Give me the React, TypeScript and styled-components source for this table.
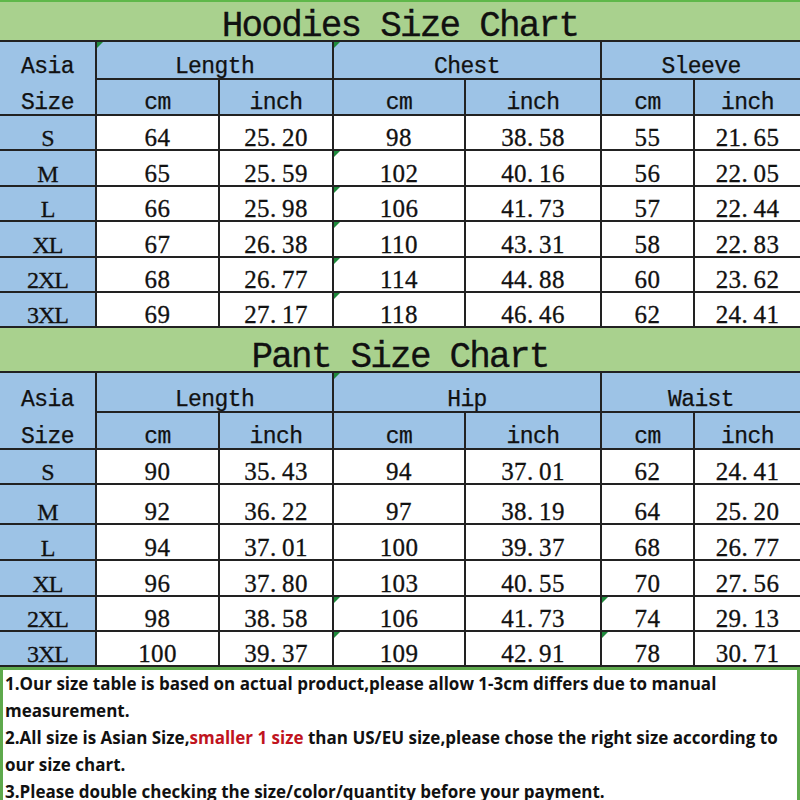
import styled, { createGlobalStyle } from 'styled-components';

const GlobalStyle = createGlobalStyle`
  html, body {
    margin: 0;
    padding: 0;
    background: #fff;
  }
  body {
    width: 800px;
    height: 800px;
    overflow: hidden;
  }
`;

interface ChartProps {
  title: string;
  groups: string[];
  rows: string[][];
  heights: number[];
  flags: string[];
  first?: boolean;
}

// cells are bottom aligned, the way a spreadsheet lays them out
const Chart = ({ title, groups, rows, heights, flags, first }: ChartProps) => {
  const template = heights.map(h => `${h}px`).join(' ');
  return (
    <Grid $rows={template}>
      <Title $top={first}>{title}</Title>
      <Cell $head $open $flag={flags.includes('h0')}>
        <Label>Asia</Label>
      </Cell>
      {groups.map((g, i) => (
        <Cell key={g} $head $span={2} $end={i === 2} $flag={flags.includes(`g${i}`)}>
          <Label>{g}</Label>
        </Cell>
      ))}
      <Cell $head>
        <Label>Size</Label>
      </Cell>
      {[0, 1, 2].map(i => [
        <Cell key={`c${i}`} $head>
          <Label>cm</Label>
        </Cell>,
        <Cell key={`i${i}`} $head $end={i === 2}>
          <Label>inch</Label>
        </Cell>,
      ])}
      {rows.map((row, r) =>
        row.map((v, c) => (
          <Cell
            key={`${r}-${c}`}
            $head={c === 0}
            $end={c === 6}
            $flag={flags.includes(`${r}-${c}`)}
          >
            {c === 0 ? <SizeText>{v}</SizeText> : <Num v={v} />}
          </Cell>
        ))
      )}
    </Grid>
  );
};

const Num = ({ v }: { v: string }) => {
  const [a, b] = v.split('.');
  return (
    <NumText>
      {a}
      {b !== undefined && (
        <>
          <Dot>.</Dot>
          {b}
        </>
      )}
    </NumText>
  );
};

const hoodies = [
  ['S', '64', '25.20', '98', '38.58', '55', '21.65'],
  ['M', '65', '25.59', '102', '40.16', '56', '22.05'],
  ['L', '66', '25.98', '106', '41.73', '57', '22.44'],
  ['XL', '67', '26.38', '110', '43.31', '58', '22.83'],
  ['2XL', '68', '26.77', '114', '44.88', '60', '23.62'],
  ['3XL', '69', '27.17', '118', '46.46', '62', '24.41'],
];

const pants = [
  ['S', '90', '35.43', '94', '37.01', '62', '24.41'],
  ['M', '92', '36.22', '97', '38.19', '64', '25.20'],
  ['L', '94', '37.01', '100', '39.37', '68', '26.77'],
  ['XL', '96', '37.80', '103', '40.55', '70', '27.56'],
  ['2XL', '98', '38.58', '106', '41.73', '74', '29.13'],
  ['3XL', '100', '39.37', '109', '42.91', '78', '30.71'],
];

export default function App() {
  return (
    <Page>
      <GlobalStyle />
      <Chart
        first
        title="Hoodies Size Chart"
        groups={['Length', 'Chest', 'Sleeve']}
        rows={hoodies}
        heights={[42, 38, 36, 35, 36, 35, 36, 35, 35]}
        flags={['g0', 'g1', '1-3', '2-3', '3-3', '4-3', '5-3']}
      />
      <Chart
        title="Pant Size Chart"
        groups={['Length', 'Hip', 'Waist']}
        rows={pants}
        heights={[45, 40, 37, 35, 40, 36, 36, 35, 35]}
        flags={['g1', '4-3', '5-3', '4-5', '5-5']}
      />
      <Notes>
        1.Our size table is based on actual product,please allow 1-3cm differs due to manual
        <br />
        measurement.
        <br />
        2.All size is Asian Size,<Red>smaller 1 size</Red> than US/EU size,please chose the right size according to
        <br />
        our size chart.
        <br />
        3.Please double checking the size/color/quantity before your payment.
      </Notes>
    </Page>
  );
}

const Page = styled.div`
  width: 800px;
  height: 800px;
  overflow: hidden;
  display: flex;
  flex-direction: column;
`;

const Grid = styled.div<{ $rows: string }>`
  display: grid;
  grid-template-columns: 97px 123px 114px 132px 136px 93px 105px;
  grid-template-rows: ${p => p.$rows};
  flex-shrink: 0;
`;

const Title = styled.div<{ $top?: boolean }>`
  grid-column: 1 / -1;
  box-sizing: border-box;
  background: #a9d18e;
  border-top: ${p => (p.$top ? '2px solid #5fb84a' : 'none')};
  border-bottom: 2px solid #222;
  display: flex;
  align-items: flex-end;
  justify-content: center;
  font-family: 'Liberation Mono', monospace;
  font-size: 36px;
  line-height: 26px;
  letter-spacing: -1.8px;
  color: #111;
  -webkit-text-stroke: 0.3px #111;
`;

const Cell = styled.div<{ $head?: boolean; $span?: number; $open?: boolean; $flag?: boolean; $end?: boolean }>`
  position: relative;
  box-sizing: border-box;
  grid-column: span ${p => p.$span ?? 1};
  background: ${p => (p.$head ? '#9dc3e6' : '#fff')};
  border-right: ${p => (p.$end ? 'none' : '2px solid #222')};
  border-bottom: ${p => (p.$open ? 'none' : '2px solid #222')};
  padding-bottom: ${p => (p.$open ? '2px' : '0')};
  display: flex;
  align-items: flex-end;
  justify-content: center;
  line-height: 22px;
  color: #111;

  &::before {
    content: '';
    display: ${p => (p.$flag ? 'block' : 'none')};
    position: absolute;
    left: 0;
    top: 0;
    width: 0;
    height: 0;
    border-top: 6px solid #1f8a3c;
    border-right: 6px solid transparent;
  }
`;

const Label = styled.span`
  font-family: 'Liberation Mono', monospace;
  font-size: 23px;
  letter-spacing: -0.6px;
  -webkit-text-stroke: 0.25px #111;
`;

const SizeText = styled.span`
  font-family: 'Liberation Serif', serif;
  font-size: 24px;
  letter-spacing: -1px;
  -webkit-text-stroke: 0.3px #111;
`;

const NumText = styled.span`
  font-family: 'Liberation Serif', serif;
  font-size: 25px;
  letter-spacing: 0.4px;
  -webkit-text-stroke: 0.3px #111;
`;

const Dot = styled.span`
  display: inline-block;
  width: 12px;
  text-align: left;
`;

const Notes = styled.div`
  flex: 1;
  box-sizing: border-box;
  border: 3px solid #5ea94c;
  border-bottom: none;
  padding: 0 0 0 2px;
  font-family: 'Open Sans', sans-serif;
  font-weight: 700;
  font-size: 17px;
  line-height: 27px;
  color: #111;
  white-space: nowrap;
  overflow: hidden;
`;

const Red = styled.span`
  color: #c0141e;
`;
